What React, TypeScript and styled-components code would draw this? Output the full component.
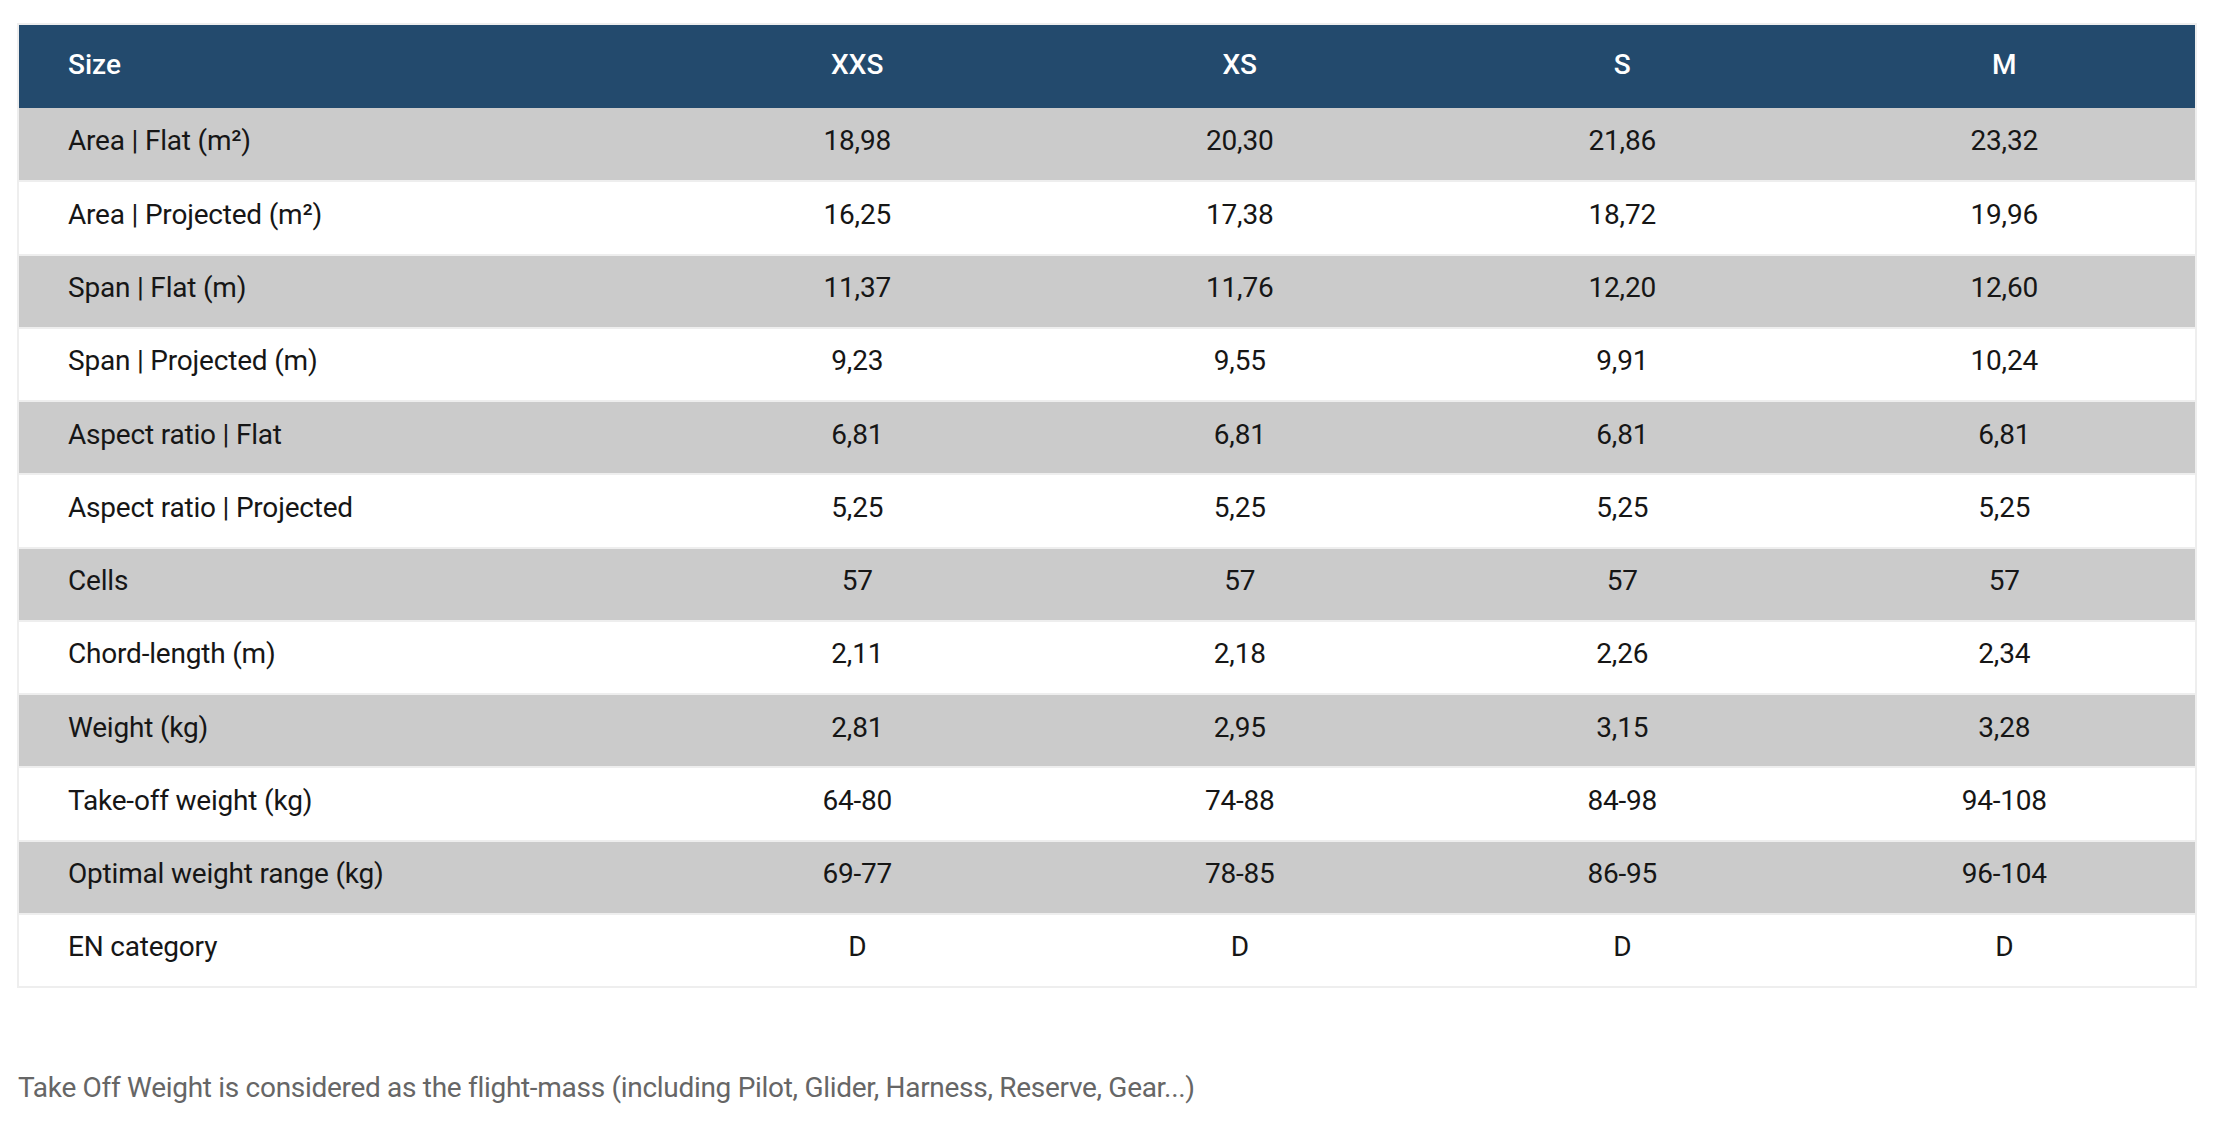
import styled, { createGlobalStyle } from "styled-components";

const GlobalStyle = createGlobalStyle`
  body {
    margin: 0;
    background: #fff;
    font-family: Roboto, "Liberation Sans", Arial, sans-serif;
  }
`;

const Page = styled.div`
  padding: 23px 20px 0 17px;
`;

const Table = styled.table`
  width: 2180px;
  border-collapse: collapse;
  border: 2px solid #eeeeee;
  table-layout: fixed;
`;

const HeadRow = styled.tr`
  background: #234a6d;
  height: 84px;
`;

const HeadCell = styled.th<{ $first?: boolean }>`
  box-sizing: border-box;
  color: #fff;
  font-size: 28px;
  font-weight: 500;
  text-align: ${(p) => (p.$first ? "left" : "center")};
  padding: 0 0 5px ${(p) => (p.$first ? "49px" : "0")};
  width: ${(p) => (p.$first ? "648px" : "auto")};
`;

const Row = styled.tr<{ $shaded: boolean }>`
  background: ${(p) => (p.$shaded ? "#cbcbcb" : "#fff")};
  height: 73.25px;
  border-top: 2px solid #eeeeee;
  &:first-child {
    border-top: none;
  }
`;

const Cell = styled.td<{ $first?: boolean }>`
  color: #161616;
  font-size: 28px;
  letter-spacing: -0.2px;
  text-align: ${(p) => (p.$first ? "left" : "center")};
  padding: 0 0 7px ${(p) => (p.$first ? "49px" : "0")};
`;

const Note = styled.p`
  margin: 83px 0 0 1px;
  color: #666;
  font-size: 28px;
  letter-spacing: -0.3px;
`;

const sizes = ["XXS", "XS", "S", "M"];

const rows: [string, string[]][] = [
  ["Area | Flat (m²)", ["18,98", "20,30", "21,86", "23,32"]],
  ["Area | Projected (m²)", ["16,25", "17,38", "18,72", "19,96"]],
  ["Span | Flat (m)", ["11,37", "11,76", "12,20", "12,60"]],
  ["Span | Projected (m)", ["9,23", "9,55", "9,91", "10,24"]],
  ["Aspect ratio | Flat", ["6,81", "6,81", "6,81", "6,81"]],
  ["Aspect ratio | Projected", ["5,25", "5,25", "5,25", "5,25"]],
  ["Cells", ["57", "57", "57", "57"]],
  ["Chord-length (m)", ["2,11", "2,18", "2,26", "2,34"]],
  ["Weight (kg)", ["2,81", "2,95", "3,15", "3,28"]],
  ["Take-off weight (kg)", ["64-80", "74-88", "84-98", "94-108"]],
  ["Optimal weight range (kg)", ["69-77", "78-85", "86-95", "96-104"]],
  ["EN category", ["D", "D", "D", "D"]],
];

export default function App() {
  return (
    <>
      <GlobalStyle />
      <Page>
        <Table>
          <thead>
            <HeadRow>
              <HeadCell $first>Size</HeadCell>
              {sizes.map((s) => (
                <HeadCell key={s}>{s}</HeadCell>
              ))}
            </HeadRow>
          </thead>
          <tbody>
            {rows.map(([label, values], i) => (
              <Row key={label} $shaded={i % 2 === 0}>
                <Cell $first>{label}</Cell>
                {values.map((v, j) => (
                  <Cell key={j}>{v}</Cell>
                ))}
              </Row>
            ))}
          </tbody>
        </Table>
        <Note>
          Take Off Weight is considered as the flight-mass (including Pilot,
          Glider, Harness, Reserve, Gear...)
        </Note>
      </Page>
    </>
  );
}
